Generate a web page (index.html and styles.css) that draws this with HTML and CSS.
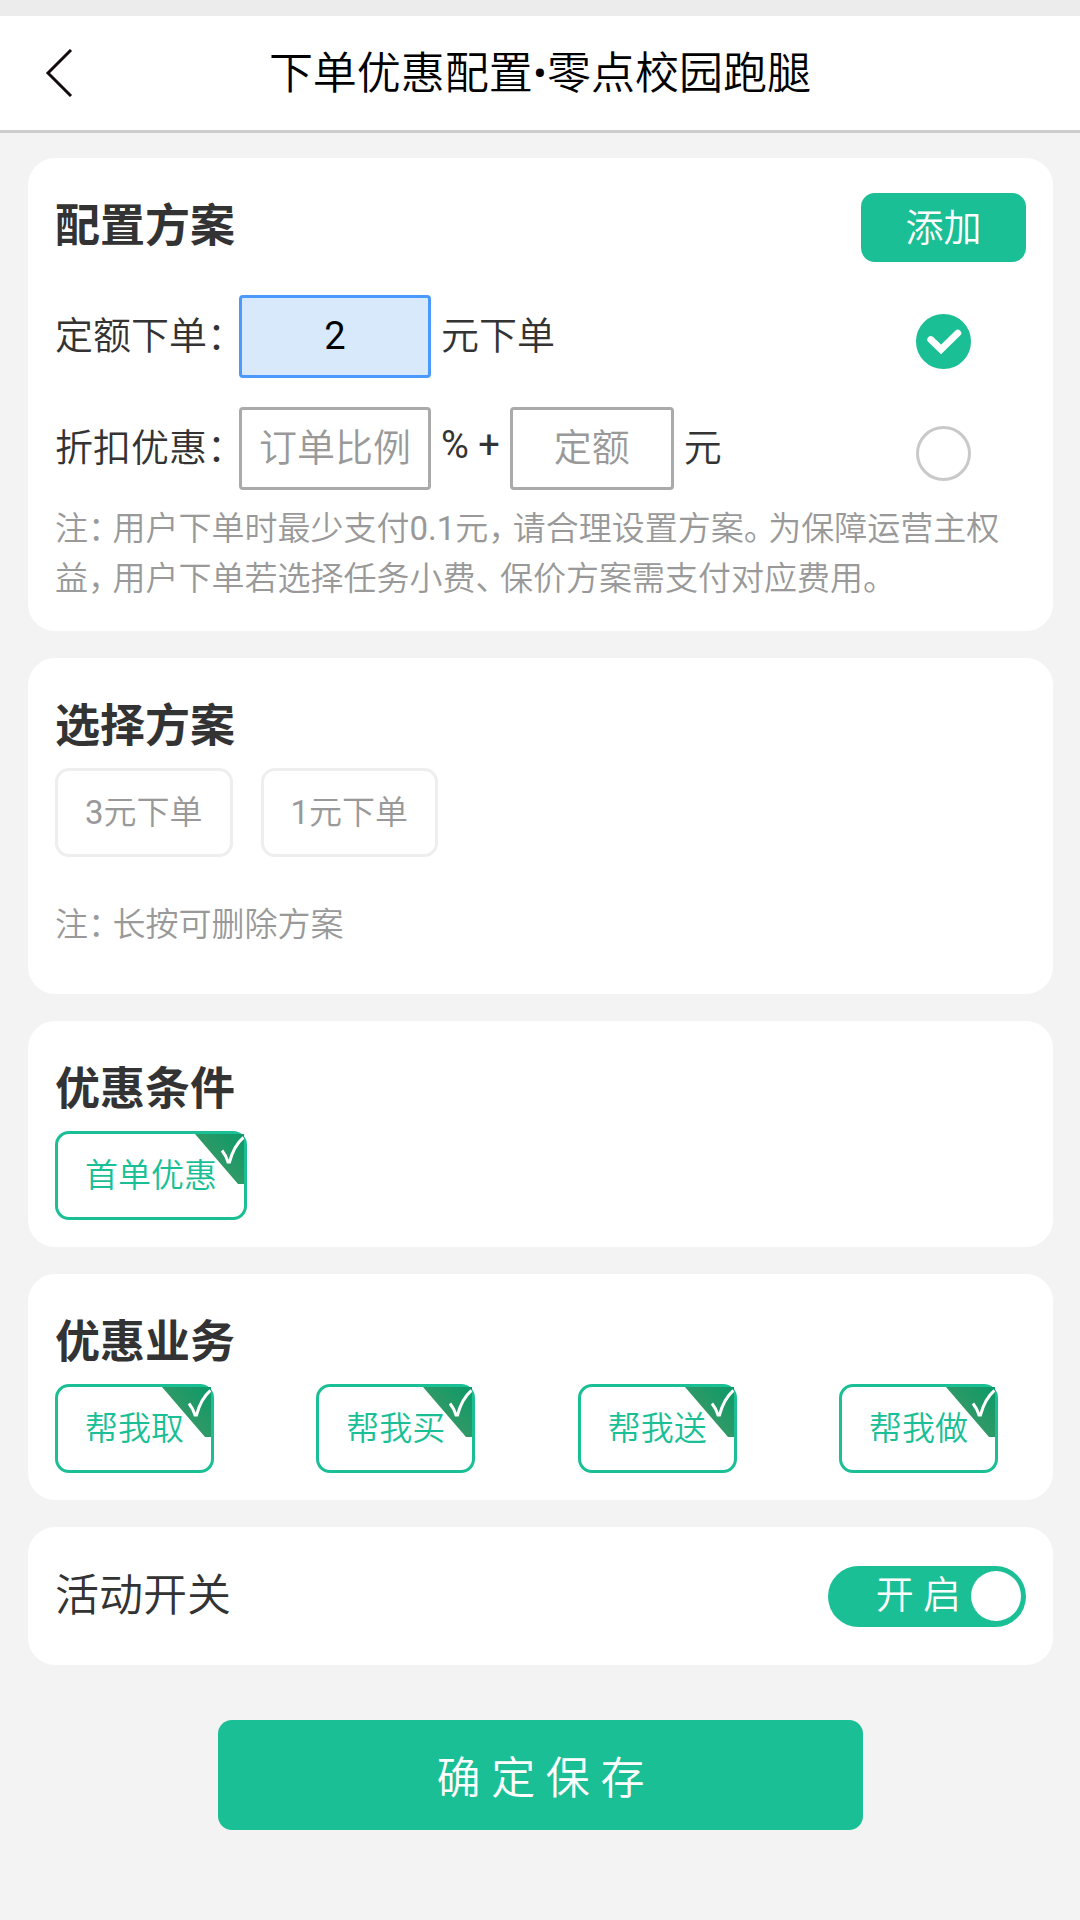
FILE: index.html
```html
<!DOCTYPE html>
<html lang="zh-CN">
<head>
<meta charset="utf-8">
<meta name="viewport" content="width=device-width, initial-scale=1">
<title>下单优惠配置</title>
<link rel="stylesheet" href="styles.css">
</head>
<body>
<header class="topbar">
  <button class="back" type="button" aria-label="返回">
    <svg width="28" height="48" viewBox="0 0 28 48" fill="none" stroke="#120a0c" stroke-width="3"><path d="M26 1 3 24 26 47"/></svg>
  </button>
  <h1 class="topbar-title">下单优惠配置•零点校园跑腿</h1>
</header>

<main class="page">
  <form class="form">
    <section class="card">
      <div class="card-head">
        <h2 class="card-title">配置方案</h2>
        <button class="add" type="button">添加</button>
      </div>
      <div class="plans">
        <div class="plan">
          <label class="plan-label" for="fixed">定额下单<span class="tight">：</span></label>
          <input class="field field-active num" id="fixed" type="text" value="2">
          <span class="plan-text">元下单</span>
          <label class="pick">
            <input class="pick-input" type="radio" name="plan" aria-label="定额下单" checked>
            <svg class="pick-mark" viewBox="0 0 56 56" fill="none" stroke="#fff" stroke-width="7" stroke-linecap="round"><path d="M15 26 25.500 36 42.500 19.500"/></svg>
          </label>
        </div>
        <div class="plan">
          <label class="plan-label" for="ratio">折扣优惠<span class="tight">：</span></label>
          <input class="field" id="ratio" type="text" placeholder="订单比例">
          <span class="plan-text num">% +</span>
          <input class="field field-short" type="text" placeholder="定额" aria-label="定额">
          <span class="plan-text">元</span>
          <label class="pick">
            <input class="pick-input" type="radio" name="plan" aria-label="折扣优惠">
          </label>
        </div>
      </div>
      <p class="note">注<span class="tight">：</span>用户下单时最少支付<span class="num">0.1</span>元<span class="tight">，</span>请合理设置方案<span class="tight">。</span>为保障运营主权益<span class="tight">，</span>用户下单若选择任务小费<span class="tight">、</span>保价方案需支付对应费用。</p>
    </section>

    <section class="card">
      <h2 class="card-title">选择方案</h2>
      <div class="chips">
        <button class="chip" type="button"><span class="num">3</span>元下单</button>
        <button class="chip" type="button"><span class="num">1</span>元下单</button>
      </div>
      <p class="note note-spaced">注<span class="tight">：</span>长按可删除方案</p>
    </section>

    <section class="card">
      <h2 class="card-title">优惠条件</h2>
      <div class="chips">
        <label class="chip chip-on"><input class="chip-input" type="checkbox" checked>首单优惠<svg class="corner" viewBox="0 0 49 50"><use href="#corner"/></svg></label>
      </div>
    </section>

    <section class="card">
      <h2 class="card-title">优惠业务</h2>
      <div class="chips chips-spread">
        <label class="chip chip-on"><input class="chip-input" type="checkbox" checked>帮我取<svg class="corner" viewBox="0 0 49 50"><use href="#corner"/></svg></label>
        <label class="chip chip-on"><input class="chip-input" type="checkbox" checked>帮我买<svg class="corner" viewBox="0 0 49 50"><use href="#corner"/></svg></label>
        <label class="chip chip-on"><input class="chip-input" type="checkbox" checked>帮我送<svg class="corner" viewBox="0 0 49 50"><use href="#corner"/></svg></label>
        <label class="chip chip-on"><input class="chip-input" type="checkbox" checked>帮我做<svg class="corner" viewBox="0 0 49 50"><use href="#corner"/></svg></label>
      </div>
    </section>

    <section class="card card-switch">
      <label class="switch-label" for="active">活动开关</label>
      <label class="switch">
        <input class="chip-input" id="active" type="checkbox" role="switch" checked>
        <span class="switch-text">开 启</span>
        <span class="knob"></span>
      </label>
    </section>

    <button class="save" type="button">确 定 保 存</button>
  </form>
</main>

<svg class="defs" width="0" height="0" aria-hidden="true">
  <defs>
    <linearGradient id="shade" x1="1" y1="0" x2="0.400" y2="0.600">
      <stop offset="0" stop-color="#0a9a68"/>
      <stop offset="1" stop-color="#339966"/>
    </linearGradient>
    <symbol id="corner" viewBox="0 0 49 50">
      <path d="M0 0H49V50H43Z" fill="url(#shade)"/>
      <path d="M27 16.500C29 19 31.500 23 33 28H34.500C37 19 42 9 48.500 3.500" fill="none" stroke="#fff" stroke-width="3"/>
    </symbol>
  </defs>
</svg>
</body>
</html>
```
FILE: styles.css
```css
* {
  box-sizing: border-box;
}

body {
  margin: 0;
  border-top: 16px solid #ececec;
  background: #f3f3f3;
  color: #333;
  font-family: Roboto, "Noto Sans CJK SC", sans-serif;
  font-weight: 350;
}

button,
input {
  margin: 0;
  padding: 0;
  font: inherit;
}

h1,
h2,
p {
  margin: 0;
}

.num {
  font-weight: 400;
}

/* Title bar */
.topbar {
  display: grid;
  grid-template-columns: 73px 1fr 73px;
  align-items: center;
  height: 117px;
  border-bottom: 3px solid #ccc;
  background: #fff;
}

.back {
  display: flex;
  justify-content: flex-end;
  border: 0;
  background: none;
}

.topbar-title {
  padding-top: 2px;
  color: #000;
  font-size: 44px;
  font-weight: 350;
  line-height: 60px;
  text-align: center;
}

/* Cards */
.page {
  padding: 25px 27px 90px 28px;
}

.form {
  display: flex;
  flex-direction: column;
  gap: 27px;
}

.card {
  padding: 35px 27px 27px;
  border-radius: 27px;
  background: #fff;
}

.card-head {
  display: flex;
  justify-content: space-between;
}

.card-title {
  font-size: 45px;
  font-weight: 700;
  line-height: 68px;
}

.add {
  width: 165px;
  height: 69px;
  border: 0;
  border-radius: 14px;
  background: #1bbf95;
  color: #fff;
  font-size: 38px;
  line-height: 68px;
}

/* Plan rows */
.plans {
  display: flex;
  flex-direction: column;
  gap: 29px;
  margin-top: 33px;
}

.plan {
  display: flex;
  align-items: center;
  gap: 10px;
  height: 83px;
  font-size: 38px;
}

.plan-label {
  width: 174px;
  padding-bottom: 8px;
  white-space: nowrap;
}

.plan-text {
  padding-bottom: 8px;
}

.field {
  width: 192px;
  height: 83px;
  padding-bottom: 2px;
  border: 3px solid #aaa;
  border-radius: 4px;
  background: #fff;
  color: #000;
  text-align: center;
}

.field::placeholder {
  color: #999;
  opacity: 1;
}

.field-active {
  border-color: #4b99fc;
  background: #d9e9fc;
}

.field-short {
  width: 164px;
}

.pick {
  display: grid;
  margin: 10px 55px 0 auto;
}

.pick-input,
.pick-mark {
  grid-area: 1 / 1;
  width: 55px;
  height: 55px;
}

.pick-input {
  appearance: none;
  border: 3px solid #c9c9c9;
  border-radius: 50%;
}

.pick-input:checked {
  border-color: #1bbf95;
  background: #1bbf95;
}

.note {
  margin-top: 14px;
  color: #999;
  font-size: 33px;
  line-height: 50px;
}

.note-spaced {
  margin: 43px 0 17px;
}

/* Half-width punctuation with a little air after it */
.tight {
  margin-right: 8px;
  font-feature-settings: "halt";
}

/* Chips */
.chips {
  display: flex;
  gap: 28px;
  margin-top: 7px;
}

.chips-spread {
  justify-content: space-between;
  padding-right: 28px;
}

.chip {
  position: relative;
  height: 89px;
  padding: 0 27px;
  border: 3px solid #eee;
  border-radius: 14px;
  background: #fff;
  color: #999;
  font-size: 33px;
  line-height: 84px;
}

.chip-on {
  border-color: #1bbf95;
  color: #1bbf95;
}

.chip-input {
  position: absolute;
  appearance: none;
}

.corner {
  position: absolute;
  top: 0;
  right: 0;
  width: 49px;
  height: 50px;
}

/* Activity switch */
.card-switch {
  display: flex;
  align-items: center;
  justify-content: space-between;
  min-height: 138px;
  padding-top: 27px;
}

.switch-label {
  font-size: 44px;
  line-height: 60px;
}

.switch {
  display: flex;
  align-items: center;
  justify-content: flex-end;
  gap: 10px;
  width: 198px;
  height: 61px;
  padding: 0 5px;
  border-radius: 31px;
  background: #1bbf95;
  color: #fff;
  font-size: 38px;
}

.switch-text {
  padding-bottom: 10px;
}

.knob {
  width: 50px;
  height: 50px;
  border-radius: 50%;
  background: #fff;
}

.save {
  align-self: center;
  width: 63%;
  height: 110px;
  margin-top: 28px;
  border: 0;
  border-radius: 14px;
  background: #1bbf95;
  color: #fff;
  font-size: 44px;
}

.defs {
  position: absolute;
}
```
